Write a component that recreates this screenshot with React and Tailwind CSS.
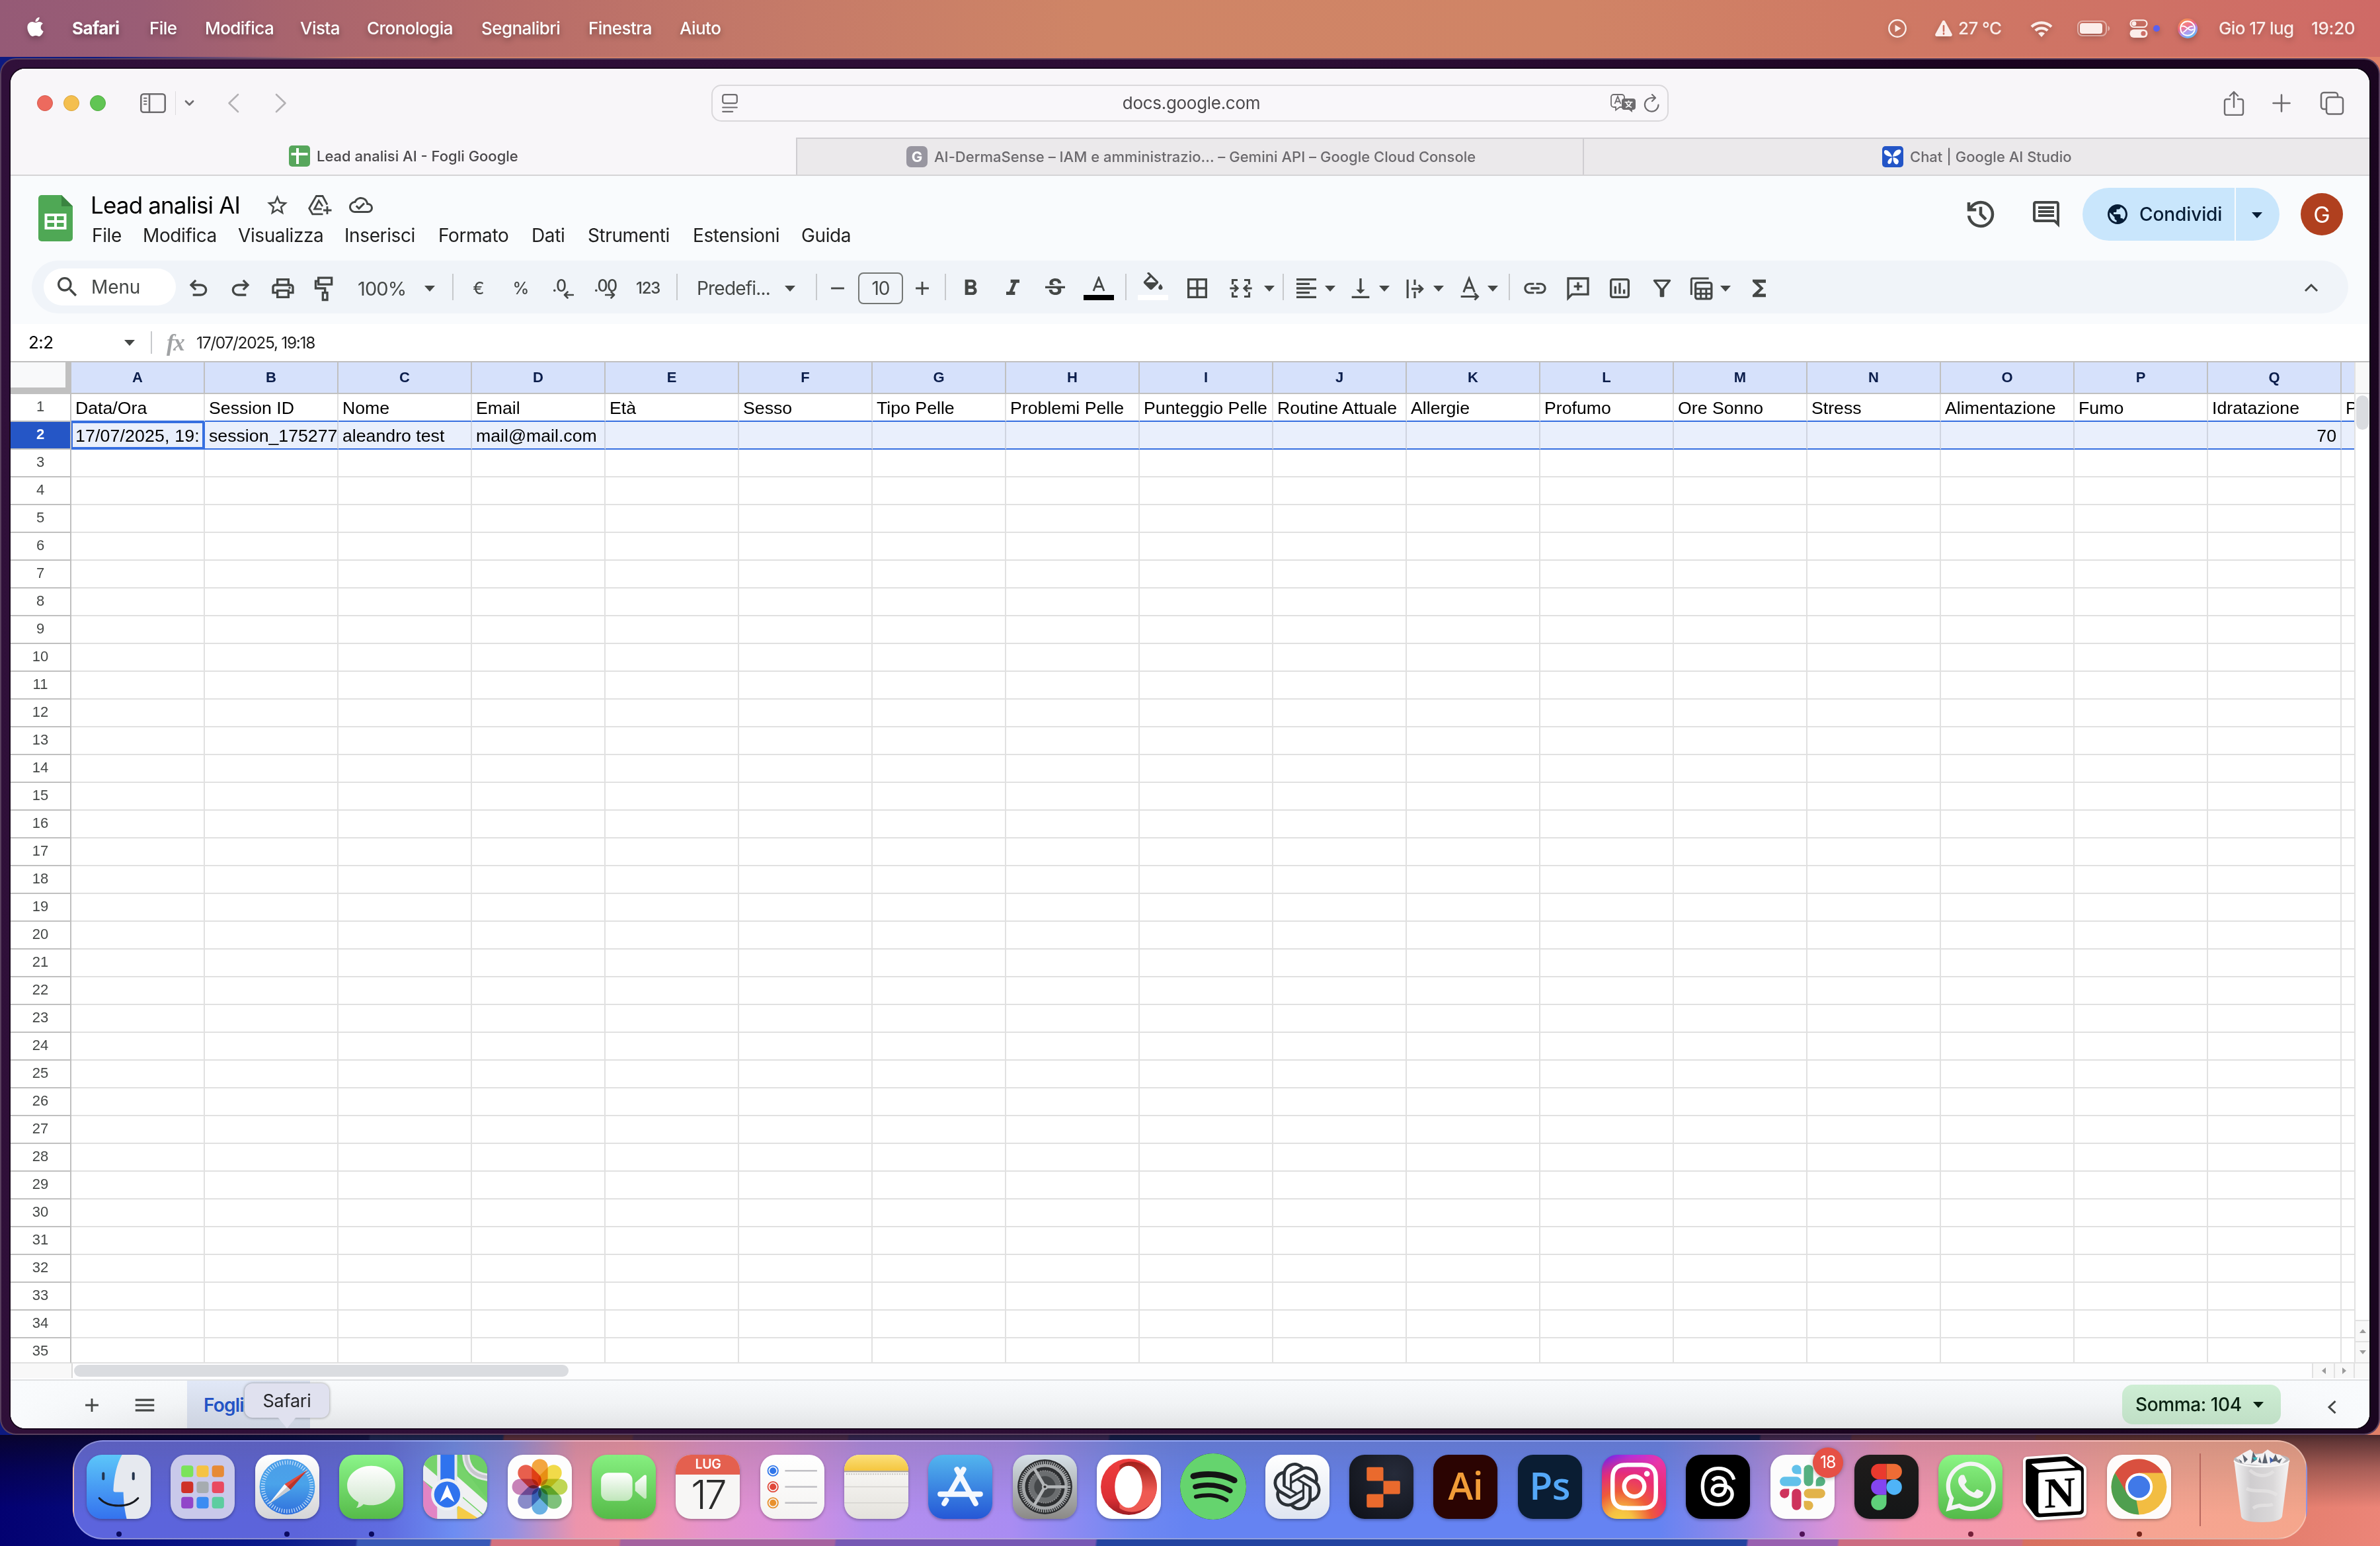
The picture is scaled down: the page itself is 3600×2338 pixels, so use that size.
import React from "react";
import { FaApple, FaWhatsapp } from "react-icons/fa";
import { SiOpenai, SiInstagram, SiThreads, SiSpotify } from "react-icons/si";
import {
  MdStarOutline, MdOutlineCloudDone, MdPublic, MdSearch, MdOutlinePrint,
  MdFormatBold, MdFormatItalic, MdStrikethroughS, MdBorderAll, MdFormatAlignLeft,
  MdVerticalAlignBottom, MdLink, MdOutlineFilterAlt, MdFunctions, MdAdd, MdRemove, MdMenu,
} from "react-icons/md";

/* ---------- shared bits ---------- */

const Stroke = ({ vb, className, children, w = 2, ...rest }) => (
  <svg viewBox={vb} className={className} fill="none" stroke="currentColor" strokeWidth={w} strokeLinecap="round" strokeLinejoin="round" {...rest}>
    {children}
  </svg>
);

const Caret = ({ className = "" }) => (
  <svg viewBox="0 0 20 20" className={"h-5 w-5 shrink-0 " + className} fill="currentColor">
    <path d="M2 6h16l-8 9z" />
  </svg>
);

/* ---------- macOS menu bar ---------- */

const MENUS = [
  ["Safari", "w-[75px] ml-[41px] font-bold tracking-[-0.5px]"],
  ["File", "w-[41px] ml-[42px]"],
  ["Modifica", "w-[102px] ml-[43px]"],
  ["Vista", "w-[58px] ml-[42px]"],
  ["Cronologia", "w-[130px] ml-[43px]"],
  ["Segnalibri", "w-[120px] ml-[43px]"],
  ["Finestra", "w-[95px] ml-[42px]"],
  ["Aiuto", "w-[62px] ml-[43px]"],
];

function MenuBar() {
  return (
    <div className="flex h-[86px] w-full shrink-0 items-center bg-[linear-gradient(90deg,#955a76_0%,#9a5d75_6%,#a8646e_12%,#b86d69_22%,#c67b68_34%,#cf8566_46%,#d08466_66%,#cf7a64_78%,#cf6a66_100%)] text-[26px] font-medium text-white">
      <FaApple className="ml-[39px] h-[33px] w-[29px] shrink-0 -translate-y-[3px] drop-shadow-[0_4px_4px_rgba(0,0,0,0.25)]" />
      {MENUS.map(([t, c]) => (
        <span key={t} className={"shrink-0 whitespace-nowrap tracking-[-0.55px] [text-shadow:0_4px_8px_rgba(0,0,0,0.35)] " + c}>{t}</span>
      ))}
      <div className="ml-auto flex h-full items-center text-[#fbeeeb] drop-shadow-[0_4px_4px_rgba(0,0,0,0.22)]">
        <svg viewBox="0 0 28 28" className="h-7 w-7"><circle cx="14" cy="14" r="12.7" fill="none" stroke="currentColor" strokeWidth="2.4" /><path d="M10.5 8.5v11l9-5.5z" fill="currentColor" /></svg>
        <svg viewBox="0 0 28 26" className="ml-[42px] h-[26px] w-7"><path d="M14 1c1 0 1.700.5 2.200 1.400l10.300 18.800c1 2-.2 3.800-2.300 3.800H3.800c-2.100 0-3.300-1.800-2.300-3.800L11.800 2.400C12.300 1.500 13 1 14 1z" fill="currentColor" /><path d="M14 9v8M14 20.300v1.200" stroke="#cc6f60" strokeWidth="2.600" strokeLinecap="round" /></svg>
        <span className="ml-2 w-[67px] whitespace-nowrap tracking-[-0.6px]">27 °C</span>
        <svg viewBox="0 0 34 25" className="ml-[42px] h-[25px] w-[34px]" fill="none" stroke="currentColor" strokeWidth="4.200"><path d="M2 9.500a21.500 21.500 0 0 1 30 0" /><path d="M7.800 15.300a13.200 13.200 0 0 1 18.400 0" /><path d="M17 25l-5-5.600a7.400 7.400 0 0 1 10 0z" fill="currentColor" stroke="none" /></svg>
        <svg viewBox="0 0 50 24" className="ml-[37px] h-6 w-[50px]"><rect x="1" y="1" width="43" height="22" rx="7" fill="none" stroke="currentColor" strokeOpacity=".5" strokeWidth="2" /><rect x="4" y="4" width="34" height="16" rx="4" fill="currentColor" /><path d="M46.500 8c3.500 1.500 3.500 6.500 0 8z" fill="currentColor" opacity=".55" /></svg>
        <svg viewBox="0 0 28 28" className="ml-[29px] h-7 w-7"><rect x="1.500" y="1.500" width="25" height="10.500" rx="5.250" fill="none" stroke="currentColor" strokeWidth="2.200" /><circle cx="7" cy="6.700" r="3.400" fill="currentColor" /><rect x=".5" y="15.500" width="27" height="12.500" rx="6.200" fill="currentColor" /><circle cx="21" cy="21.700" r="3.600" fill="#cc6f68" /></svg>
        <span className="ml-2 h-[10px] w-[10px] rounded-full bg-[#5a60f0]" />
        <svg viewBox="0 0 30 30" className="ml-[27px] h-[30px] w-[30px]">
          <defs><linearGradient id="siri" x1="0.200" y1="0" x2="0.700" y2="1"><stop offset="0" stopColor="#f7a14a" /><stop offset=".4" stopColor="#ef5f7d" /><stop offset=".65" stopColor="#a88df0" /><stop offset="1" stopColor="#58c4f2" /></linearGradient></defs>
          <circle cx="15" cy="15" r="15" fill="url(#siri)" />
          <circle cx="15" cy="15" r="10.800" fill="#fff" fillOpacity=".12" stroke="#fff" strokeWidth="2" />
          <path d="M6 12c4-2 6 1 9 3s6 4 9 1M8 21c3-1 5-4 7-6s4-4 8-3" fill="none" stroke="#fff" strokeWidth="1.800" />
        </svg>
        <span className="ml-[32px] w-[125px] whitespace-nowrap tracking-[-0.6px]">Gio 17 lug</span>
        <span className="ml-[15px] mr-[33px] w-[71px] whitespace-nowrap tracking-[-0.3px]">19:20</span>
      </div>
    </div>
  );
}

/* ---------- Safari chrome ---------- */

function SafariToolbar() {
  return (
    <div className="flex h-[104px] w-full shrink-0 items-center bg-[#f8f6f9] text-[#6d6b6e] shadow-[inset_0_2px_0_#fff]">
      <div className="ml-10 flex gap-4">
        <span className="h-6 w-6 rounded-full border border-[#d65a4e] bg-[#ed6a5e]" />
        <span className="h-6 w-6 rounded-full border border-[#dba63f] bg-[#f4bf4f]" />
        <span className="h-6 w-6 rounded-full border border-[#52ad43] bg-[#61c554]" />
      </div>
      <Stroke vb="0 0 39 30" w={2.6} className="ml-[52px] h-[30px] w-[39px]"><rect x="1.300" y="1.300" width="36.400" height="27.400" rx="4" /><path d="M14 1.500v27" /><path d="M6 7.500h3.500M6 12h3.500M6 16.500h3.500" strokeWidth="2" /></Stroke>
      <span className="ml-[14px] h-9 w-px bg-[#dddbde]" />
      <Stroke vb="0 0 15 10" w={2.800} className="ml-[13px] h-[10px] w-[15px]"><path d="M2 2l5.500 5.500L13 2" /></Stroke>
      <Stroke vb="0 0 18 30" w={2.600} className="ml-[50px] h-[30px] w-[18px] text-[#b3b1b4]"><path d="M16 2L2.500 15 16 28" /></Stroke>
      <Stroke vb="0 0 18 30" w={2.600} className="ml-[54px] h-[30px] w-[18px] text-[#b3b1b4]"><path d="M2 2l13.500 13L2 28" /></Stroke>
      <div className="ml-[642px] flex h-14 w-[1448px] items-center rounded-[15px] border-2 border-[#dad8db] bg-[#f9f7fa]">
        <Stroke vb="0 0 24 28" w={2.200} className="ml-[14px] h-7 w-6"><rect x="1.200" y="1.200" width="21.600" height="13" rx="3" /><path d="M1.200 20.500h21.600M1.200 26.800h15" /></Stroke>
        <span className="flex-1 pl-[52px] text-center text-[26px] tracking-[-0.3px] text-[#4b494c]">docs.google.com</span>
        <svg viewBox="0 0 39 28" className="h-7 w-[39px] shrink-0">
          <path d="M18 20h-4l-6 4.500V20H5a4 4 0 0 1-4-4V5a4 4 0 0 1 4-4h12a4 4 0 0 1 4 4v2" fill="none" stroke="currentColor" strokeWidth="1.800" />
          <path d="M6.500 15l4.500-11 4.500 11M8 11.500h6" fill="none" stroke="currentColor" strokeWidth="1.800" />
          <path d="M20 7h14a4 4 0 0 1 4 4v9a4 4 0 0 1-4 4h-1v4l-5-4h-8a4 4 0 0 1-3-4v-9a4 4 0 0 1 3-4z" fill="currentColor" />
          <path d="M21.500 12.500h12M27.500 10v2.500M31 13c-1 3-4 6-8 7.500M24 13c1 3 4 6 8 7.500" fill="none" stroke="#fff" strokeWidth="1.700" />
        </svg>
        <Stroke vb="0 0 24 28" w={2.200} className="ml-[11px] mr-[12px] h-7 w-6 shrink-0"><path d="M13 1l5 5-5 5M17.500 6H12A10.300 10.300 0 1 0 22.500 16.500" /></Stroke>
      </div>
      <Stroke vb="0 0 32 38" w={2.400} className="ml-[839px] h-[38px] w-8"><path d="M10 13H5a3 3 0 0 0-3 3v18a3 3 0 0 0 3 3h22a3 3 0 0 0 3-3V16a3 3 0 0 0-3-3h-5M16 25V2M10 8l6-6 6 6" /></Stroke>
      <Stroke vb="0 0 28 28" w={2.600} className="ml-[42px] h-7 w-7"><path d="M14 1.500v25M1.500 14h25" /></Stroke>
      <Stroke vb="0 0 37 36" w={2.500} className="ml-[44px] h-9 w-[37px]"><rect x="10" y="9" width="25" height="25.500" rx="4" /><path d="M9 27H6a4 4 0 0 1-4-4V6a4 4 0 0 1 4-4h17a4 4 0 0 1 4 4v2" /></Stroke>
    </div>
  );
}

function SafariTabs() {
  return (
    <div className="flex h-[58px] w-full shrink-0 border-b-2 border-[#d5d4d6] bg-[#f8f6f9] text-[22px] font-medium text-[#6b696d]">
      <div className="flex w-[1188px] items-center pl-[421px] text-[#4b494c]">
        <svg viewBox="0 0 32 32" className="h-8 w-8 shrink-0"><rect width="32" height="32" rx="5" fill="#57a65c" /><path d="M3.500 13h25M13 4v24" stroke="#fff" strokeWidth="4" /></svg>
        <span className="ml-[10px] whitespace-nowrap">Lead analisi AI - Fogli Google</span>
      </div>
      <div className="flex w-[1190px] items-center border-l-2 border-t-2 border-[#cfcdd1] bg-[#ebe9eb] pl-[165px]">
        <span className="flex h-8 w-8 shrink-0 items-center justify-center rounded-[7px] bg-[#9896a0] text-[22px] font-bold text-white">G</span>
        <span className="ml-[10px] whitespace-nowrap tracking-[0.02px]">AI-DermaSense – IAM e amministrazio... – Gemini API – Google Cloud Console</span>
      </div>
      <div className="flex flex-1 items-center border-l-2 border-t-2 border-[#cfcdd1] bg-[#ebe9eb] pl-[451px]">
        <svg viewBox="0 0 32 32" className="h-8 w-8 shrink-0"><rect width="32" height="32" rx="5" fill="#2355c7" /><g fill="#fff"><path d="M15 16C7 16 2 12 3 8s8-2 12 8z" /><path d="M16 16C17 8 23 4 27 5.500S27 15 16 16z" /><path d="M14.500 17c1 5-1 10-4 10s-4-6 4-10z" /><path d="M16.500 17c7 1 10 5 7.500 9s-8 0-7.500-9z" /></g></svg>
        <span className="ml-[10px] whitespace-nowrap">Chat | Google AI Studio</span>
      </div>
    </div>
  );
}

/* ---------- Sheets header ---------- */

const DOC_MENUS = [
  ["File", "w-[44px]"], ["Modifica", "w-[112px] ml-[33px]"], ["Visualizza", "w-[127px] ml-[32px]"],
  ["Inserisci", "w-[109px] ml-[34px]"], ["Formato", "w-[109px] ml-[33px]"], ["Dati", "w-[53px] ml-[32px]"],
  ["Strumenti", "w-[128px] ml-[32px]"], ["Estensioni", "w-[132px] ml-[31px]"], ["Guida", "w-[77px] ml-[32px]"],
];

function DocHeader() {
  return (
    <div className="flex h-[128px] w-full shrink-0 bg-[#f9fbfd] text-[#444746]">
      <svg viewBox="0 0 52 70" className="ml-[42px] mt-[29px] h-[70px] w-[52px]"><path d="M5 0h30l17 17v48a5 5 0 0 1-5 5H5a5 5 0 0 1-5-5V5a5 5 0 0 1 5-5z" fill="#4fa855" /><path d="M35 0l17 17H35z" fill="#3a8440" /><path d="M9.500 28h33v24h-33z" fill="#fff" /><path d="M13.500 32h10.500v6H13.500zM28 32h10.500v6H28zM13.500 42h10.500v6H13.500zM28 42h10.500v6H28z" fill="#4fa855" /></svg>
      <div className="ml-[27px] flex flex-col">
        <div className="mt-[20px] flex h-12 items-center">
          <span className="w-[228px] whitespace-nowrap text-[35px] tracking-[-0.85px] text-black">Lead analisi AI</span>
          <MdStarOutline className="ml-[36px] h-[37px] w-[37px]" />
          <Stroke vb="0 0 36 31" w={2.800} className="ml-[28px] h-[31px] w-9" strokeLinecap="butt" strokeLinejoin="miter"><path d="M29 14.500L22 1.500h-9.500L1.700 20l5 8.800H22.500M22 17l-5.700-8.500-6.600 12.700h11M29 17v12M23 23h12.500" /></Stroke>
          <MdOutlineCloudDone className="ml-[26px] h-9 w-9" />
        </div>
        <div className="ml-0.5 mt-[2px] flex h-10 items-center text-[28px] text-[#1f1f1f]">
          {DOC_MENUS.map(([t, c]) => <span key={t} className={"whitespace-nowrap tracking-[-0.4px] " + c}>{t}</span>)}
        </div>
      </div>
      <div className="ml-auto flex h-[116px] items-center">
        <svg viewBox="0 -960 960 960" className="h-[54px] w-[54px]" fill="currentColor"><path d="M480-120q-138 0-240.500-91.500T122-440h82q14 104 92.500 172T480-200q117 0 198.500-81.500T760-480q0-117-81.500-198.500T480-760q-69 0-129 32t-101 88h110v80H120v-240h80v94q51-64 124.500-99T480-840q75 0 140.500 28.500t114 77q48.500 48.500 77 114T840-480q0 75-28.500 140.500t-77 114q-48.500 48.500-114 77T480-120Zm112-192L440-464v-216h80v184l128 128-56 56Z" /></svg>
        <svg viewBox="0 0 24 24" className="ml-[48px] mr-px h-12 w-12" fill="currentColor"><path d="M21.990 4c0-1.100-.89-2-1.990-2H4c-1.100 0-2 .9-2 2v12c0 1.100.9 2 2 2h14l4 4-.010-18zM20 4v13.170L18.830 16H4V4h16zM6 12h12v2H6zm0-3h12v2H6zm0-3h12v2H6z" /></svg>
        <div className="ml-[30px] flex h-20 w-[298px] items-center rounded-[40px] bg-[#c9e6fc] text-[#071d36]">
          <MdPublic className="ml-[35px] h-9 w-9" />
          <span className="ml-[15px] w-[128px] whitespace-nowrap text-[28px] font-medium tracking-[-0.1px]">Condividi</span>
          <span className="ml-[16px] h-full w-0.5 bg-[#f9fbfd]" />
          <Caret className="ml-[22px] translate-y-px" />
        </div>
        <span className="ml-8 mr-10 flex h-16 w-16 items-center justify-center rounded-full bg-[#b0401f] pt-0.5 text-[34px] text-white">G</span>
      </div>
    </div>
  );
}

const Sym = ({ children, vb = "0 0 24 24" }) => <svg viewBox={vb} className="h-10 w-10 shrink-0" fill="currentColor">{children}</svg>;
const Divider = "div";
const Arrow = "arrow";
const mdc = "h-10 w-10 shrink-0";

const TOOLS = [
  ["ml-[14px] w-10", <Sym vb="0 -960 960 960"><path d="M280-200v-80h284q63 0 109.500-40T720-420q0-60-46.500-100T564-560H312l104 104-56 56-200-200 200-200 56 56-104 104h252q97 0 166.500 63T800-420q0 94-69.500 157T564-200H280Z" /></Sym>],
  ["ml-6 w-10", <Sym vb="0 -960 960 960"><path d="M396-200q-97 0-166.500-63T160-420q0-94 69.500-157T396-640h252L544-744l56-56 200 200-200 200-56-56 104-104H396q-63 0-109.500 40T240-420q0 60 46.500 100T396-280h284v80H396Z" /></Sym>],
  ["ml-6 w-10", <MdOutlinePrint className={mdc} />],
  ["ml-[22px] w-10", <Sym><path d="M7 2.500h12v6H7zM7 5.500H4.500V12H13v4M11 16h4v6.500h-4z" fill="none" stroke="currentColor" strokeWidth="2" /></Sym>],
  ["ml-[31px] w-[74px] text-[29px] tracking-[-0.9px]", "100%"],
  ["ml-[25px]", Arrow],
  ["ml-6", Divider],
  ["ml-[18px] w-10 justify-center text-[26px] -translate-y-0.5", "€"],
  ["ml-6 w-10 justify-center text-[25px] font-medium -translate-y-0.5", "%"],
  ["ml-6 w-10", <span className="relative block h-10 w-10"><span className="absolute left-[3px] top-[3px] text-[25px] leading-[26px] font-medium tracking-[-1px]">.0</span><Stroke vb="0 0 16 12" w={2.600} className="absolute left-[20px] top-[24px] h-3 w-4"><path d="M15 6H2M6.500 1.500L2 6l4.500 4.500" /></Stroke></span>],
  ["ml-6 w-10", <span className="relative block h-10 w-10"><span className="absolute left-[2px] top-[3px] text-[25px] leading-[26px] font-medium tracking-[-1.500px]">.00</span><Stroke vb="0 0 16 12" w={2.600} className="absolute left-[19px] top-[24px] h-3 w-4"><path d="M1 6h13M9.500 1.500L14 6l-4.500 4.500" /></Stroke></span>],
  ["ml-[26px] w-10 text-[24px] font-medium tracking-[-1.200px] -translate-y-0.5", "123"],
  ["ml-[21px]", Divider],
  ["ml-[29px] w-[111px] text-[28px] tracking-[-0.8px] -translate-y-0.5", "Predefi..."],
  ["ml-5 -translate-y-0.5", Arrow],
  ["ml-[29px]", Divider],
  ["ml-[11px] w-10 -translate-y-0.5 justify-center", <MdRemove className="h-[34px] w-[34px]" />],
  ["ml-[11px] w-[68px] h-12 -translate-y-0.5 justify-center rounded-lg border-2 border-[#747775] text-[28px] tracking-[-1px]", "10"],
  ["ml-[9px] w-10 -translate-y-0.5 justify-center", <MdAdd className="h-[34px] w-[34px]" />],
  ["ml-[14px]", Divider],
  ["ml-[17px] w-10", <MdFormatBold className={mdc} />],
  ["ml-6 w-10", <MdFormatItalic className={mdc} />],
  ["ml-6 w-10", <MdStrikethroughS className={mdc} />],
  ["ml-[23px] w-[46px]", <svg viewBox="0 0 46 40" className="h-10 w-[46px] translate-y-[2px]"><path d="M15 23l8-20 8 20M17.500 16.500h11" stroke="currentColor" strokeWidth="2.800" fill="none" transform="translate(0 -1)" /><path d="M0 28h46v8H0z" fill="#000" /></svg>],
  ["ml-[17px]", Divider],
  ["ml-[17px] w-[46px]", <svg viewBox="0 0 46 46" className="h-[46px] w-[46px] -translate-y-px" fill="currentColor"><path transform="translate(4 -1) scale(1.6)" d="M16.560 8.940L7.620 0 6.210 1.410l2.380 2.380-5.150 5.150c-.59.590-.59 1.540 0 2.120l5.500 5.500c.290.290.68.440 1.060.440s.77-.15 1.060-.44l5.500-5.500c.59-.58.59-1.530 0-2.120zM5.210 10L10 5.210 14.790 10H5.210zM19 11.500s-2 2.170-2 3.500c0 1.100.9 2 2 2s2-.9 2-2c0-1.330-2-3.500-2-3.500z" /><path d="M0 34h46v8H0z" fill="#fff" /></svg>],
  ["ml-6 w-10", <MdBorderAll className={mdc} />],
  ["ml-[26px] w-10", <Sym><path d="M4.500 8.500V4.500H9M15 4.500h4.500v4M19.500 15.500v4H15M9 19.500H4.500v-4M2 12h6.500M6 9l3 3-3 3M22 12h-6.500M18 9l-3 3 3 3" fill="none" stroke="currentColor" strokeWidth="1.900" /></Sym>],
  ["ml-[13px]", Arrow],
  ["ml-[10px]", Divider],
  ["ml-[14px] w-10", <MdFormatAlignLeft className={mdc} />],
  ["ml-[6px]", Arrow],
  ["ml-4 w-10", <MdVerticalAlignBottom className={mdc} />],
  ["ml-[6px]", Arrow],
  ["ml-4 w-10", <Sym><path d="M5.500 4v17M12 4v5M12 15v6M9 12.500h10M15.500 9l3.500 3.500-3.500 3.500" fill="none" stroke="currentColor" strokeWidth="1.900" /></Sym>],
  ["ml-[6px]", Arrow],
  ["ml-[17px] w-10", <Sym><path d="M6.500 15.500l5-12.500 5 12.500M8.300 11.500h6.400M4 19.500h15M16.500 16.500l3 3-3 3" fill="none" stroke="currentColor" strokeWidth="1.800" /></Sym>],
  ["ml-[5px]", Arrow],
  ["ml-[14px]", Divider],
  ["ml-[18px] w-10", <MdLink className={mdc} />],
  ["ml-[25px] w-10", <Sym><path d="M3 3h18v14.500H6.500L3 21zM12 6.500v7.500M8.200 10.300h7.600" fill="none" stroke="currentColor" strokeWidth="2" /></Sym>],
  ["ml-[23px] w-10", <Sym><rect x="4" y="4" width="16" height="16" rx="1.500" fill="none" stroke="currentColor" strokeWidth="2" /><path d="M8 17V10M12 17V7M16 17v-4" stroke="currentColor" strokeWidth="2" /></Sym>],
  ["ml-6 w-10", <MdOutlineFilterAlt className={mdc} />],
  ["ml-[19px] w-10", <Sym><path d="M3.200 18V4a1 1 0 0 1 1-1H19" fill="none" stroke="currentColor" strokeWidth="1.800" /><rect x="7" y="7" width="14.500" height="14.500" rx="1.500" fill="none" stroke="currentColor" strokeWidth="2" /><path d="M7 12.500h14.500M7 17h14.500M11.800 12.500V21M16.700 12.500V21" stroke="currentColor" strokeWidth="1.800" /></Sym>],
  ["ml-[7px]", Arrow],
  ["ml-[21px] w-10", <MdFunctions className={mdc} />],
];

function Toolbar() {
  return (
    <div className="flex h-24 w-full shrink-0 bg-[#f9fbfd] px-8 text-[#444746]">
      <div className="flex h-20 w-full items-center rounded-[40px] bg-[#f0f4f9]">
        <div className="ml-[18px] flex h-14 w-[200px] items-center rounded-[28px] bg-white">
          <MdSearch className="ml-4 h-10 w-10" />
          <span className="ml-[16px] text-[28px] tracking-[-0.1px]">Menu</span>
        </div>
        {TOOLS.map(([c, x], i) =>
          x === Divider ? <span key={i} className={"h-10 w-0.5 shrink-0 bg-[#c7c9cc] " + c} />
          : x === Arrow ? <Caret key={i} className={"translate-y-[2px] " + c} />
          : <span key={i} className={"flex shrink-0 translate-y-[2px] items-center whitespace-nowrap " + c}>{x}</span>
        )}
        <Stroke vb="0 0 40 40" w={3} className="ml-auto mr-9 h-10 w-10" strokeLinecap="butt" strokeLinejoin="miter"><path d="M11 26l9-9 9 9" /></Stroke>
      </div>
    </div>
  );
}

function FormulaBar() {
  return (
    <div className="flex h-[58px] w-full shrink-0 items-center border-b-2 border-[#c0c0c0] bg-white text-[24.500px] text-black">
      <span className="ml-[27px] w-[143px] whitespace-nowrap text-[26px] tracking-[-0.6px]">2:2</span>
      <Caret className="text-[#444746]" />
      <span className="ml-[22px] h-[34px] w-0.5 bg-[#c7c9cc]" />
      <span className="ml-[22px] w-[45px] font-['Liberation_Serif',serif] text-[35px] font-bold italic tracking-[-1.500px] text-[#a0a2a4]">fx</span>
      <span className="whitespace-nowrap tracking-[-1.300px] text-[#1f1f1f]">17/07/2025, 19:18</span>
    </div>
  );
}

/* ---------- grid ---------- */

const COLS = "ABCDEFGHIJKLMNOPQ".split("");
const ROW1 = ["Data/Ora", "Session ID", "Nome", "Email", "Età", "Sesso", "Tipo Pelle", "Problemi Pelle", "Punteggio Pelle", "Routine Attuale", "Allergie", "Profumo", "Ore Sonno", "Stress", "Alimentazione", "Fumo", "Idratazione", "P"];
const ROW2 = ["17/07/2025, 19:18", "session_17527727", "aleandro test", "mail@mail.com"];

function Row({ n }) {
  const sel = n === 2;
  const last = n === 35;
  return (
    <div className={"flex w-full shrink-0 " + (last ? "h-[38px]" : "h-[42px]")}>
      <div className={"flex w-[92px] shrink-0 items-center justify-center border-b-2 border-r-2 font-['Liberation_Sans',sans-serif] text-[22px] " + (sel ? "border-[#c0c0c0] bg-[#2556c6] pb-0.5 font-bold text-white" : last ? "border-b-[#e1e1e1] border-r-[#c0c0c0] pt-0.5 text-[#444746]" : "border-[#c0c0c0] pb-0.5 text-[#444746]")}>{n}</div>
      {Array.from({ length: 18 }, (_, i) => {
        const text = n === 1 ? ROW1[i] : sel ? (i === 16 ? "70" : ROW2[i]) : "";
        return (
          <div key={i} className={
            "flex shrink-0 items-center overflow-hidden whitespace-nowrap border-b-2 pl-1.5 pt-[2px] font-['Liberation_Sans',sans-serif] text-[26.700px] leading-none text-black "
            + (i === 17 ? "w-[19px] " : "w-[202px] border-r-2 ")
            + (sel || n === 1 ? "border-b-[#366fe0] " : "border-b-[#e1e1e1] ")
            + (sel ? (i === 0 ? "border-r-[#366fe0] bg-[#e9effc] tracking-[0.15px] shadow-[inset_2px_2px_0_#366fe0,inset_-2px_-2px_0_#366fe0] " : "border-r-[#cfd4e0] bg-[#e9effc] ") : "border-r-[#e1e1e1] ")
            + (sel && i === 16 ? "justify-end pr-1.5" : "")
          }>
            {sel && i === 0 ? <span className="w-[189px] shrink-0 overflow-hidden pb-1 -mb-1">{text}</span> : text}
          </div>
        );
      })}
    </div>
  );
}

function Grid() {
  return (
    <div className="flex h-[1514px] w-full shrink-0 bg-white">
      <div className="flex w-[3545px] flex-col overflow-hidden">
        <div className="flex h-12 w-full shrink-0">
          <div className="w-[92px] shrink-0 border-b-[10px] border-r-[9px] border-[#c0c0c0] bg-[#f8f9fa]" />
          {COLS.map((c) => <div key={c} className="flex w-[202px] shrink-0 items-center justify-center border-b-2 border-r-2 border-[#c0c0c0] bg-[#d6e1fb] pb-px font-['Liberation_Sans',sans-serif] text-[22px] font-bold text-[#0b1d4b]">{c}</div>)}
          <div className="w-[19px] border-b-2 border-[#c0c0c0] bg-[#d6e1fb]" />
        </div>
        {Array.from({ length: 35 }, (_, i) => <Row key={i} n={i + 1} />)}
      </div>
      <div className="flex flex-1 flex-col border-l-2 border-[#e1e1e1]">
        <div className="h-12 border-b-2 border-[#d9d9d9] bg-[#f8f8f8]" />
        <div className="mx-px mt-0.5 h-[52px] w-[19px] rounded-full bg-[#dadce0]" />
        <div className="mt-auto flex h-8 items-center justify-center border-t-2 border-[#e1e1e1] bg-[#f8f8f8]"><svg viewBox="0 0 10 8" className="h-2 w-[10px]"><path d="M0 7l5-6 5 6z" fill="#9b9b9b" /></svg></div>
        <div className="flex h-[34px] items-center justify-center border-y-2 border-[#e1e1e1] bg-[#f8f8f8]"><svg viewBox="0 0 10 8" className="h-2 w-[10px]"><path d="M0 1l5 6 5-6z" fill="#9b9b9b" /></svg></div>
      </div>
    </div>
  );
}

function HScroll() {
  return (
    <div className="flex h-[26px] w-full shrink-0 border-b-2 border-[#dfe1e3] bg-[#fdfdfe]">
      <div className="h-[22px] w-[94px] border-r-2 border-[#d9d9d9] bg-[#f8f8f8]" />
      <div className="ml-0.5 mt-0.5 h-[18px] w-[748px] rounded-full bg-[#dadce0]" />
      <div className="ml-auto flex h-[22px] bg-[#f8f8f8]">
        <div className="flex w-[33px] items-center justify-center border-l-2 border-[#e1e1e1]"><svg viewBox="0 0 8 12" className="h-3 w-2"><path d="M7 1v10L1 6z" fill="#9b9b9b" /></svg></div>
        <div className="flex w-[30px] items-center justify-center border-l-2 border-[#e1e1e1]"><svg viewBox="0 0 8 12" className="h-3 w-2"><path d="M1 1v10l6-5z" fill="#9b9b9b" /></svg></div>
        <div className="w-[24px] border-l-2 border-[#e1e1e1]" />
      </div>
    </div>
  );
}

function SheetBar() {
  return (
    <div className="flex h-[72px] w-full shrink-0 items-center bg-[linear-gradient(90deg,#f9fbfd_0%,rgba(249,251,253,0)_8%,rgba(249,251,253,0)_90%,#f9fbfd_100%),linear-gradient(180deg,#f8fafc_0%,#f1f3f5_50%,#e2e4e6_100%)] text-[#444746]">
      <MdAdd className="ml-[106px] h-[34px] w-[34px] translate-y-px" />
      <MdMenu className="ml-[44px] h-[38px] w-[38px] translate-y-px" />
      <div className="relative ml-[45px] flex h-full w-[186px] items-center bg-[linear-gradient(180deg,#e1e8f7,#cdd3e0)] pl-[25px] pt-0.5 text-[28px] font-semibold tracking-[-0.8px] text-[#2353c5]">
        Foglio1
        <div className="absolute left-[87px] top-1 flex h-[52px] w-[128px] items-center justify-center rounded-xl bg-[#e0e1ef] text-[27px] font-normal tracking-[-0.2px] text-[#252528] shadow-[0_0_4px_rgba(0,0,0,0.4)]">
          Safari
          <svg viewBox="0 0 36 17" className="absolute left-[46px] top-[51px] h-[17px] w-9"><path d="M0 0h36c-5 0-6 2-8 5l-10 12L8 5C6 2 5 0 0 0z" fill="#e0e1ef" /></svg>
        </div>
      </div>
      <div className="ml-auto flex h-[60px] w-60 items-center rounded-2xl bg-[linear-gradient(180deg,#ceeed4,#c0dfc6)] pl-[20px] text-[28px] font-medium text-[#0b2212]">
        <span className="w-[160px] whitespace-nowrap tracking-[-0.4px]">Somma: 104</span>
        <Caret className="ml-[16px]" />
      </div>
      <Stroke vb="0 0 14 20" w={3} className="ml-[70px] mr-[50px] mt-2 h-5 w-[14px]" strokeLinecap="butt" strokeLinejoin="miter"><path d="M12.500 1L3 10l9.500 9" /></Stroke>
    </div>
  );
}

/* ---------- dock ---------- */

const Tile = ({ children, className = "" }) => (
  <div className={"h-[97px] w-[97px] overflow-hidden rounded-[23px] shadow-[0_2px_4px_rgba(0,0,0,0.3)] " + className}>{children}</div>
);
const Art = ({ children }) => <svg viewBox="0 0 96 96" className="h-full w-full">{children}</svg>;

const Finder = () => (
  <Tile className="bg-[linear-gradient(180deg,#5cc6f9,#3472ee)]"><Art>
    <path d="M53 0h43v96H60c-3-12-4.500-24-5-40H43c-2 0-3-1-3-3C41 33 45 14 53 0z" fill="#e6e9ef" />
    <path d="M25 28v8M70 28v8" stroke="#24344d" strokeWidth="4" strokeLinecap="round" />
    <path d="M19 65c14 15 44 15 58 0" fill="none" stroke="#17191f" strokeWidth="3" strokeLinecap="round" />
  </Art></Tile>
);
const PAD = [["#7be35a", 16, 16], ["#f5c344", 39, 16], ["#e68a36", 62, 16], ["#cf3127", 16, 40], ["#a6acb0", 39, 40], ["#e9495f", 62, 40], ["#9145c9", 16, 63], ["#3b8cf2", 39, 63], ["#5ccda0", 62, 63]];
const Launchpad = () => (
  <Tile className="bg-[#c9c9ea]"><Art>{PAD.map(([c, x, y]) => <rect key={c} x={x} y={y} width="18" height="17.500" rx="4" fill={c} />)}</Art></Tile>
);
const SafariIcon = () => (
  <Tile className="bg-[linear-gradient(180deg,#fff,#d5d5d7)]"><Art>
    <defs><linearGradient id="saf" x1="0" y1="0" x2="0" y2="1"><stop offset="0" stopColor="#4b9de8" /><stop offset=".45" stopColor="#4aa3ea" /><stop offset="1" stopColor="#2f6fdc" /></linearGradient></defs>
    <circle cx="48" cy="48" r="41.500" fill="url(#saf)" />
    <circle cx="48" cy="48" r="36.500" fill="none" stroke="#d7eafc" strokeWidth="6" strokeDasharray="1.100 2.720" />
    <path d="M78 23L52.500 52.500 44 44z" fill="#e2493c" /><path d="M78 23L52.500 52.500 48 48z" fill="#b8352c" />
    <path d="M20 74L44 44l8.500 8.500z" fill="#f6f7f9" /><path d="M20 74L48 48l4.500 4.500z" fill="#c8ccd2" />
  </Art></Tile>
);
const Messages = () => (
  <Tile className="bg-[linear-gradient(180deg,#8bf58a,#56bb49)]"><Art>
    <defs><linearGradient id="msg" x1="0" y1="0" x2="0" y2="1"><stop offset="0" stopColor="#fff" /><stop offset="1" stopColor="#cfe6cc" /></linearGradient></defs>
    <path d="M48 16.500c20 0 36 13 36 29.500S68 75.500 48 75.500c-4 0-8-.5-11.500-1.500-2.500 3-6.500 5-11 5.500 2.500-2.500 3.500-5.500 3.500-8.500C18.500 65.500 12 56.500 12 46c0-16.500 16-29.500 36-29.500z" fill="url(#msg)" />
  </Art></Tile>
);
const Maps = () => (
  <Tile className="bg-[#76d36b]"><Art>
    <path d="M0 38l30 30v28H0z" fill="#e284c4" /><path d="M0 12L96 94v-22L20 5 0-10z" fill="#f1f1f3" /><path d="M0 14l96 82H76L0 38z" fill="#eceef0" />
    <path d="M0-2h22v34L0 12z" fill="#76d36b" />
    <path d="M52 76l32 20H50z" fill="#f5cc47" /><path d="M45 0h51v66z" fill="#6fcf66" />
    <path d="M64-2c0 22 12 34 34 36" fill="none" stroke="#e6e6ea" strokeWidth="11" /><path d="M64-2c0 22 12 34 34 36" fill="none" stroke="#c7c7cd" strokeWidth="5" />
    <path d="M21 0h30v96H21z" fill="#e6e8ee" /><path d="M26 0h21v60H26z" fill="#2f73ee" />
    <circle cx="36" cy="59.500" r="24" fill="#eef0f4" /><circle cx="36" cy="59.500" r="19.500" fill="#2f73ee" /><path d="M36 45l11 26-11-8-11 8z" fill="#fff" />
  </Art></Tile>
);
const PETALS = ["#f49b25", "#f2d72f", "#b9d33b", "#6dbb6a", "#55a8e2", "#7a7cc4", "#c272b0", "#e84a34"];
const Photos = () => (
  <Tile className="bg-[#fdfdfd]"><Art>{PETALS.map((c, i) => <rect key={c} x="36" y="6.500" width="24" height="40" rx="12" fill={c} opacity=".88" className="mix-blend-multiply" transform={`rotate(${i * 45} 48 48)`} />)}</Art></Tile>
);
const FaceTime = () => (
  <Tile className="bg-[linear-gradient(180deg,#86ef80,#55bb48)]"><Art>
    <defs><linearGradient id="ft" x1="0" y1="0" x2="0" y2="1"><stop offset="0" stopColor="#fff" /><stop offset="1" stopColor="#c0e6ba" /></linearGradient></defs>
    <rect x="14" y="27" width="47" height="42" rx="11" fill="url(#ft)" /><path d="M65 42l13-11c2-1.500 4-1 4 1.500v31c0 2.500-2 3-4 1.500L65 54z" fill="url(#ft)" />
  </Art></Tile>
);
const CalendarIcon = () => (
  <Tile className="flex flex-col bg-[#f7f6f5]">
    <div className="flex h-[30px] w-full shrink-0 items-center justify-center bg-[#e4604f] pt-px text-[19.500px] font-semibold leading-none tracking-[-0.3px] text-white">LUG</div>
    <div className="flex w-full flex-1 items-center justify-center pb-1.5 text-[60px] font-light leading-none tracking-[-3px] text-[#2b2b2b]">17</div>
  </Tile>
);
const Reminders = () => (
  <Tile className="bg-[linear-gradient(180deg,#fff,#f4f3f1)]"><Art>
    {[["#2f76ea", 24], ["#e0483a", 48], ["#e8912e", 72]].map(([c, y]) => <g key={c}><circle cx="19" cy={y} r="7.600" fill="none" stroke={c} strokeWidth="1.800" /><circle cx="19" cy={y} r="5" fill={c} /><path d={`M37 ${y}h48`} stroke="#c0bfc4" strokeWidth="2.400" /></g>)}
  </Art></Tile>
);
const Notes = () => (
  <Tile className="bg-[linear-gradient(180deg,#fdfcfb,#e4e2dc)]"><Art>
    <defs><linearGradient id="nt" x1="0" y1="0" x2="0" y2="1"><stop offset="0" stopColor="#fbe07a" /><stop offset="1" stopColor="#f5c63f" /></linearGradient></defs>
    <path d="M0 0h96v24H0z" fill="url(#nt)" /><path d="M0 24h96v2H0z" fill="#a8a190" /><path d="M3 29h92" stroke="#c4c2bd" strokeWidth="2" strokeDasharray="1.800 1.800" /><path d="M0 48h96M0 72h96" stroke="#d5d3d0" strokeWidth="1.600" />
  </Art></Tile>
);
const AppStore = () => (
  <Tile className="bg-[linear-gradient(180deg,#53b6ee,#2557d6)]"><Art><g stroke="#f4f8fe" strokeWidth="8" strokeLinecap="round" fill="none"><path d="M18 59h60" /><path d="M53 22L33 57M27 68l-3 5" /><path d="M43 22l28 51" /></g></Art></Tile>
);
const Settings = () => (
  <Tile className="bg-[linear-gradient(180deg,#d6e1e8,#8b8986)]"><Art>
    <circle cx="48" cy="48" r="41" fill="#2c2e30" /><circle cx="48" cy="48" r="36" fill="none" stroke="#a9acae" strokeWidth="5" strokeDasharray="1.600 1.600" /><circle cx="48" cy="48" r="32" fill="none" stroke="#a4a7a9" strokeWidth="4.500" />
    <circle cx="48" cy="48" r="24" fill="#6b6e70" stroke="#88898b" strokeWidth="2" strokeDasharray="2 1.500" /><circle cx="48" cy="48" r="16" fill="#45484a" />
    <path d="M48 48h32M48 48L32 20.500M48 48L32 75.500" stroke="#b4b7b9" strokeWidth="4.500" /><circle cx="48" cy="48" r="4.500" fill="#b4b7b9" /><circle cx="48" cy="48" r="2" fill="#333" />
  </Art></Tile>
);
const Opera = () => (
  <Tile className="bg-white"><Art>
    <defs><linearGradient id="op" x1="0" y1="0" x2="0" y2="1"><stop offset="0" stopColor="#a2201b" /><stop offset=".6" stopColor="#ef5a52" /><stop offset="1" stopColor="#ee5a53" /></linearGradient><linearGradient id="op2" x1="0" y1="0" x2="0" y2="1"><stop offset="0" stopColor="#ee3d3d" /><stop offset=".7" stopColor="#dd3035" /><stop offset="1" stopColor="#9c1c22" /></linearGradient></defs>
    <circle cx="48" cy="48" r="42" fill="url(#op2)" /><path d="M34 16c14-10 34-5 44 4 8 8 12 18 12 28s-4 20-12 28c-10 9-30 14-44 4z" fill="url(#op)" /><ellipse cx="47.500" cy="48" rx="20.500" ry="31.500" fill="#fff" />
  </Art></Tile>
);
const Spotify = () => <div className="h-[100px] w-[100px] rounded-full bg-[#141414]"><SiSpotify className="h-full w-full text-[#65d46e]" /></div>;
const ChatGPT = () => <Tile className="flex items-center justify-center bg-[linear-gradient(180deg,#fff,#dfe5f0)]"><SiOpenai className="h-[72px] w-[72px] text-[#2b3137]" /></Tile>;
const Replit = () => <Tile className="bg-[radial-gradient(circle_at_70%_30%,#262b3a,#0e1016)]"><Art><path d="M28 18.500h21a2 2 0 0 1 2 2V39H28a2 2 0 0 1-2-2V20.500a2 2 0 0 1 2-2zM51 39h23a2 2 0 0 1 2 2v16a2 2 0 0 1-2 2H51zM28 59h23v18a2 2 0 0 1-2 2H28a2 2 0 0 1-2-2V61a2 2 0 0 1 2-2z" fill="#ea6a2d" /></Art></Tile>;
const Adobe = ({ t, c }) => <Tile className={"flex items-center justify-center pb-1 font-['Open_Sans',sans-serif] text-[57px] font-semibold leading-none tracking-[-0.500px] " + c}>{t}</Tile>;
const Instagram = () => <Tile className="flex items-center justify-center bg-[radial-gradient(circle_at_30%_105%,#f9d33f_0%,#f6c043_15%,#ee5a3a_38%,rgba(235,45,110,0.9)_60%,rgba(235,45,110,0)_85%),linear-gradient(120deg,#5524f5_0%,#b52fe0_30%,#e935a8_60%,#ea2f72_100%)]"><SiInstagram className="h-[72px] w-[72px] text-white" /></Tile>;
const Threads = () => <Tile className="flex items-center justify-center bg-black"><SiThreads className="h-[60px] w-[60px] text-white" /></Tile>;
const Slack = () => (
  <div className="relative">
    <Tile className="bg-[#fcfcfc]"><Art>
      <g fill="#62c1ea"><rect x="14" y="33" width="32" height="14" rx="7" /><path d="M46 29V22a7 7 0 1 0-7 7z" /></g>
      <g fill="#55b081"><rect x="50" y="15" width="14" height="32" rx="7" /><path d="M68 47h7a7 7 0 1 0-7-7z" /></g>
      <g fill="#ce335c"><rect x="32" y="51" width="14" height="32" rx="7" /><path d="M28 51h-7a7 7 0 1 0 7 7z" /></g>
      <g fill="#e2b34a"><rect x="50" y="51" width="32" height="14" rx="7" /><path d="M50 69v7a7 7 0 1 0 7-7z" /></g>
    </Art></Tile>
    <span className="absolute -top-[11px] left-[64px] flex h-[46px] w-[46px] items-center justify-center rounded-full bg-[#e65045] text-[25px] tracking-[-1px] text-white shadow-[0_1px_6px_rgba(0,0,0,0.3)]">18</span>
  </div>
);
const Figma = () => (
  <Tile className="bg-[linear-gradient(180deg,#1f1c1b,#141617)]"><Art>
    <path d="M48 13.500H36.500a11.500 11.500 0 0 0 0 23.300H48z" fill="#ea3a2e" /><path d="M48 13.500h11.500a11.500 11.500 0 0 1 0 23.300H48z" fill="#ee6c35" /><path d="M48 36.800H36.500a11.500 11.500 0 0 0 0 23.200H48z" fill="#8445f0" /><circle cx="59.500" cy="48.400" r="11.600" fill="#4fb4f8" /><path d="M48 60H36.500A11.500 11.500 0 1 0 48 71.500z" fill="#5fd07a" />
  </Art></Tile>
);
const WhatsApp = () => <Tile className="flex items-center justify-center bg-[linear-gradient(180deg,#8bf584,#53ba49)]"><FaWhatsapp className="h-[86px] w-[86px] text-[#f4f4f4]" /></Tile>;
const Notion = () => (
  <svg viewBox="0 0 96 100" className="h-[101px] w-[97px] drop-shadow-[0_2px_2px_rgba(0,0,0,0.3)]">
    <path d="M6 5L62 1c4-.3 6 0 9 2l20 14c3 2 4 4 4 8v62c0 6-3 8-8 9l-62 4c-4 .2-7-1-9-4L3 80c-2-3-3-5-3-8V12c0-4 2-6.700 6-7z" fill="#fff" />
    <path d="M8 8.500l54-4c3-.2 5 0 7 1.500l18 12.500c3 2 4 4 4 6.500v60c0 4-2 6-5.500 6.500l-61 4c-3 .2-5-.8-7-3L6 77c-1.500-2-2-3.500-2-6V13c0-3 1-4.300 4-4.500z" fill="#000" />
    <path d="M14 15.500l47-3.800c2-.2 3 0 4.500 1L77 20c1 .8.700 1.500-.5 1.600L26 24.700c-1.500 0-3-.3-4-1.200l-8.500-6.300c-1-.8-.8-1.600.5-1.700zM26 28.500l57-3.400c2.500-.1 4 1 4 3.500v54c0 2.500-1 3.800-3.500 4l-57 3.300c-2.500.1-3.500-1-3.500-3.500V32c0-2.300.8-3.400 3-3.500z" fill="#fff" />
    <text x="55" y="80" textAnchor="middle" fontFamily="Liberation Serif, serif" fontWeight="bold" fontSize="64" transform="skewY(-3) translate(0 3)">N</text>
  </svg>
);
const Chrome = () => (
  <Tile className="bg-[#fefbfa]"><Art>
    <circle cx="48" cy="48" r="41.500" fill="#f2bd42" />
    <path d="M12 27.300a41.500 41.500 0 0 1 72 0H48L30 59z" fill="#d9503f" />
    <path d="M12 27.300L30.100 58.400 48 69l0 20.500A41.500 41.500 0 0 1 12 27.300z" fill="#4f9f4f" /><path d="M66 58.400L48 89.500 44 68z" fill="#f2bd42" />
    <circle cx="48" cy="48" r="20.500" fill="#fff" /><circle cx="48" cy="48" r="16.500" fill="#4079e8" />
  </Art></Tile>
);
const Trash = () => (
  <svg viewBox="0 0 86 112" className="h-[112px] w-[86px]">
    <defs><linearGradient id="tr" x1="0" y1="0" x2="1" y2="0"><stop offset="0" stopColor="#f4f4f5" /><stop offset=".3" stopColor="#cfcdcf" /><stop offset=".7" stopColor="#dad8d9" /><stop offset="1" stopColor="#f6f4f4" /></linearGradient></defs>
    <path d="M1 16h84L74 102c-1 6-12 9-31 9s-30-3-31-9z" fill="url(#tr)" /><ellipse cx="43" cy="16" rx="42" ry="9" fill="#b9b7ba" />
    <path d="M4 14l12-8 10-5 8 8 10-2 8-6 9 6 10 2 9 7-7 7-14 2-12 1-14-2-16-1z" fill="#f3f2f3" />
    <path d="M14 8l8 8-5 5zM30 4l6 12-9 6zM48 6l4 16h-8zM64 8l-6 12 10-2zM74 14l-4 8-5-3zM8 15l5 4-1 3zM40 12l3 10-5-2z" fill="#5d6470" /><path d="M29 13l8 0-4 5z" fill="#33b6b8" /><path d="M55 12l6 5-5 5z" fill="#3c5aa8" />
    <path d="M1 18c8 12 76 12 84 0" fill="none" stroke="#fafafa" strokeWidth="2" />
    <path d="M25 32c10 10 25 12 36 2M20 60c14 8 30-2 46 10M30 90c10-8 20-2 30-6" stroke="#e9e7e8" strokeWidth="5" fill="none" opacity=".6" />
  </svg>
);

const APPS = [
  [Finder, "bg-[#0a0a60]"], [Launchpad], [SafariIcon, "bg-[#0a0a60]"], [Messages, "bg-[#0a0a60]"], [Maps], [Photos], [FaceTime], [CalendarIcon], [Reminders], [Notes],
  [AppStore], [Settings], [Opera], [Spotify], [ChatGPT], [Replit],
  [() => <Adobe t="Ai" c="bg-[#2b0402] text-[#f29d38]" />], [() => <Adobe t="Ps" c="bg-[#0a1d33] text-[#54a8f8]" />],
  [Instagram], [Threads], [Slack, "bg-[#4f1258]"], [Figma], [WhatsApp, "bg-[#741f38]"], [Notion], [Chrome, "bg-[#75251a]"],
];

function Dock() {
  return (
    <div className="flex h-[168px] w-full shrink-0 justify-start bg-[linear-gradient(180deg,rgba(10,5,15,0.72)_0px,rgba(10,5,15,0.6)_10px,rgba(10,5,15,0.3)_50px,rgba(0,0,0,0)_110px),linear-gradient(97deg,#030070_0%,#0a1a8a_12%,#1c2c94_15.400%,#3858b6_15.500%,#3858b6_21%,#d4707e_21.100%,#d4707e_26.400%,#a5629f_26.500%,#a5629f_35.400%,#7658b4_35.500%,#7658b4_46.300%,#2343a0_46.400%,#2343a0_73.500%,#9860b0_73.600%,#9860b0_77.300%,#cc6c82_77.400%,#cc6c82_85%,#d87060_85.100%,#dc7864_92%,#ec8578_100%)]">
      <div className="ml-[110px] mt-2 flex h-[150px] w-[3380px] rounded-[46px] border-2 border-white/30 bg-[linear-gradient(180deg,rgba(90,80,80,0.22)_0%,rgba(90,80,80,0)_75%),linear-gradient(90deg,#5c64dd_0%,#5c64da_10%,#5f6ce0_14%,#6d8df2_17%,#8f90e6_19.500%,#ec94ac_22.500%,#f497a8_25%,#e593cd_28.500%,#dc90da_31.500%,#b48eee_35.500%,#a98cf2_42%,#6f88f2_47.500%,#6583f2_50%,#6583f2_71%,#9a8ae8_75%,#d792d8_78.500%,#f396b2_82%,#f59aa6_88%,#f6a492_93%,#f5a68c_100%)] pl-[4px]">
        {APPS.map(([Icon, dot], i) => (
          <div key={i} className="flex h-full w-[127.333px] shrink-0 flex-col items-center">
            <div className="mt-[15px] flex h-[106px] items-center"><Icon /></div>
            <span className={"mt-[15px] h-2 w-2 rounded-full " + (dot || "")} />
          </div>
        ))}
        <span className="ml-[28px] mt-[18px] h-[110px] w-0.5 bg-[#b9685f]" />
        <div className="ml-[49px] mt-[11px]"><Trash /></div>
      </div>
    </div>
  );
}

export default function App() {
  return (
    <div className="flex h-[2338px] w-[3600px] flex-col overflow-hidden bg-[#030070] font-['Inter',sans-serif] leading-none">
      <MenuBar />
      <div className="h-[2084px] w-full shrink-0 bg-[linear-gradient(90deg,#0d1a80_0%,#0d1a80_4%,#d0806a_15%,#e08068_100%)] pt-0.5">
        <div className="h-full w-full rounded-[24px] border-2 border-[#59405e] bg-[linear-gradient(100deg,#30103a_0%,#2b0d33_55%,#1b0420_75%,#1a0620_100%)] px-[14px] pt-[14px]">
          <div className="flex h-[2056px] w-[3568px] flex-col overflow-hidden rounded-[22px] bg-white shadow-[0_0_0_2px_rgba(0,0,0,0.5)]">
            <SafariToolbar />
            <SafariTabs />
            <DocHeader />
            <Toolbar />
            <FormulaBar />
            <Grid />
            <HScroll />
            <SheetBar />
          </div>
        </div>
      </div>
      <Dock />
    </div>
  );
}
